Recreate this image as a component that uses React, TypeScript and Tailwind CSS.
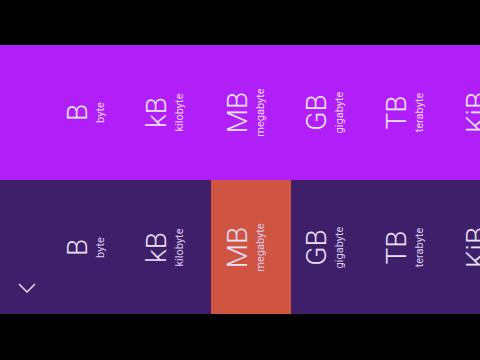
const units = [
  { sym: "B", name: "byte" },
  { sym: "kB", name: "kilobyte" },
  { sym: "MB", name: "megabyte" },
  { sym: "GB", name: "gigabyte" },
  { sym: "TB", name: "terabyte" },
  { sym: "KiB", name: "kibibyte" },
];

function UnitStrip({ selected, tone }: { selected?: string; tone: "light" | "dark" }) {
  return (
    <div className="flex h-full pl-[51px]">
      {units.map((u) => {
        const active = u.sym === selected;
        return (
          <div
            key={u.sym}
            className={`relative w-[80px] h-full shrink-0 flex items-center justify-center pr-[10px] ${
              active ? "bg-[#cf5441]" : ""
            }`}
          >
            <div className="-rotate-90 flex flex-col items-center">
              <span
                className={`text-[28px] font-light leading-none ${
                  tone === "light" ? "text-[#f7e6ff]" : "text-[#ece2f7]"
                }`}
              >
                {u.sym}
              </span>
              <span
                className={`text-[11px] leading-[16px] mt-[1px] ${
                  tone === "light" ? "text-[#f1d6ff]" : "text-[#dcccef]"
                }`}
              >
                {u.name}
              </span>
            </div>
          </div>
        );
      })}
    </div>
  );
}

export default function App() {
  return (
    <div
      className="w-[480px] h-[360px] bg-black flex flex-col overflow-hidden"
      style={{ fontFamily: "Roboto, 'Open Sans', sans-serif" }}
    >
      <div className="h-[45px] shrink-0" />
      <div className="h-[135px] shrink-0 bg-[#b01ef8] overflow-hidden">
        <UnitStrip tone="light" />
      </div>
      <div className="relative h-[134px] shrink-0 bg-[#3d1f6a] overflow-hidden">
        <UnitStrip tone="dark" selected="MB" />
        <button className="absolute left-[18px] bottom-[21px] text-[#e6dcf5]">
          <svg width="18" height="10" viewBox="0 0 18 10" fill="none">
            <polyline points="1,1 9,9 17,1" stroke="currentColor" strokeWidth="1.5" />
          </svg>
        </button>
      </div>
      <div className="flex-1" />
    </div>
  );
}
